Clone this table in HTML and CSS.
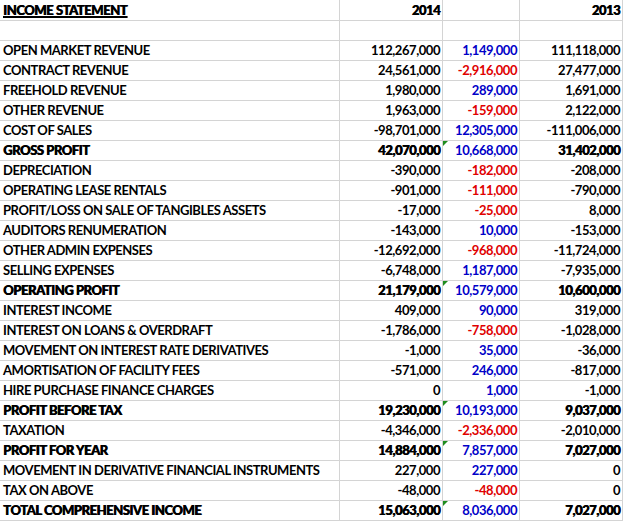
FILE: index.html
```html
<!DOCTYPE html>
<html>
<head>
<meta charset="utf-8">
<link rel="stylesheet" href="styles.css">
</head>
<body>
<div class="sheet">
  <div class="c lab title"><span class="u">INCOME STATEMENT</span></div><div class="c num b">2014</div><div class="c num"></div><div class="c num b">2013</div>
  <div class="c lab"></div><div class="c num"></div><div class="c num"></div><div class="c num"></div>
  <div class="c lab">OPEN MARKET REVENUE</div><div class="c num">112,267,000</div><div class="c num pos">1,149,000</div><div class="c num">111,118,000</div>
  <div class="c lab">CONTRACT REVENUE</div><div class="c num">24,561,000</div><div class="c num neg">-2,916,000</div><div class="c num">27,477,000</div>
  <div class="c lab">FREEHOLD REVENUE</div><div class="c num">1,980,000</div><div class="c num pos">289,000</div><div class="c num">1,691,000</div>
  <div class="c lab">OTHER REVENUE</div><div class="c num">1,963,000</div><div class="c num neg">-159,000</div><div class="c num">2,122,000</div>
  <div class="c lab">COST OF SALES</div><div class="c num">-98,701,000</div><div class="c num pos">12,305,000</div><div class="c num">-111,006,000</div>
  <div class="c lab b">GROSS PROFIT</div><div class="c num b">42,070,000</div><div class="c num pos flag">10,668,000</div><div class="c num b">31,402,000</div>
  <div class="c lab">DEPRECIATION</div><div class="c num">-390,000</div><div class="c num neg">-182,000</div><div class="c num">-208,000</div>
  <div class="c lab">OPERATING LEASE RENTALS</div><div class="c num">-901,000</div><div class="c num neg">-111,000</div><div class="c num">-790,000</div>
  <div class="c lab">PROFIT/LOSS ON SALE OF TANGIBLES ASSETS</div><div class="c num">-17,000</div><div class="c num neg">-25,000</div><div class="c num">8,000</div>
  <div class="c lab">AUDITORS RENUMERATION</div><div class="c num">-143,000</div><div class="c num pos">10,000</div><div class="c num">-153,000</div>
  <div class="c lab">OTHER ADMIN EXPENSES</div><div class="c num">-12,692,000</div><div class="c num neg">-968,000</div><div class="c num">-11,724,000</div>
  <div class="c lab">SELLING EXPENSES</div><div class="c num">-6,748,000</div><div class="c num pos">1,187,000</div><div class="c num">-7,935,000</div>
  <div class="c lab b">OPERATING PROFIT</div><div class="c num b">21,179,000</div><div class="c num pos flag">10,579,000</div><div class="c num b">10,600,000</div>
  <div class="c lab">INTEREST INCOME</div><div class="c num">409,000</div><div class="c num pos">90,000</div><div class="c num">319,000</div>
  <div class="c lab">INTEREST ON LOANS &amp; OVERDRAFT</div><div class="c num">-1,786,000</div><div class="c num neg">-758,000</div><div class="c num">-1,028,000</div>
  <div class="c lab">MOVEMENT ON INTEREST RATE DERIVATIVES</div><div class="c num">-1,000</div><div class="c num pos">35,000</div><div class="c num">-36,000</div>
  <div class="c lab">AMORTISATION OF FACILITY FEES</div><div class="c num">-571,000</div><div class="c num pos">246,000</div><div class="c num">-817,000</div>
  <div class="c lab">HIRE PURCHASE FINANCE CHARGES</div><div class="c num">0</div><div class="c num pos">1,000</div><div class="c num">-1,000</div>
  <div class="c lab b">PROFIT BEFORE TAX</div><div class="c num b">19,230,000</div><div class="c num pos flag">10,193,000</div><div class="c num b">9,037,000</div>
  <div class="c lab">TAXATION</div><div class="c num">-4,346,000</div><div class="c num neg">-2,336,000</div><div class="c num">-2,010,000</div>
  <div class="c lab b">PROFIT FOR YEAR</div><div class="c num b">14,884,000</div><div class="c num pos flag">7,857,000</div><div class="c num b">7,027,000</div>
  <div class="c lab">MOVEMENT IN DERIVATIVE FINANCIAL INSTRUMENTS</div><div class="c num">227,000</div><div class="c num pos">227,000</div><div class="c num">0</div>
  <div class="c lab">TAX ON ABOVE</div><div class="c num">-48,000</div><div class="c num neg">-48,000</div><div class="c num">0</div>
  <div class="c lab b">TOTAL COMPREHENSIVE INCOME</div><div class="c num b">15,063,000</div><div class="c num pos flag">8,036,000</div><div class="c num b">7,027,000</div>
</div>
</body>
</html>
```
FILE: styles.css
```css
html, body {
  margin: 0;
  padding: 0;
  background: #ffffff;
}
.sheet {
  display: grid;
  grid-template-columns: 340px 103px 77px 103px;
  grid-template-rows: 21px;
  grid-auto-rows: 20px;
  width: 623px;
  font-family: "Lato", "Open Sans", sans-serif;
  font-size: 13px;
  font-weight: 700;
  letter-spacing: -0.45px;
  color: #000;
}
.c {
  box-sizing: border-box;
  border-right: 1px solid #d4d4d4;
  border-bottom: 1px solid #d4d4d4;
  display: flex;
  align-items: flex-end;
  padding: 0 2px 2px 3px;
  white-space: nowrap;
  overflow: hidden;
  line-height: 16px;
  position: relative;
}
.num {
  justify-content: flex-end;
}
.b {
  font-weight: 900;
  text-shadow: 0.6px 0 0 currentColor;
}
.title {
  font-weight: 900;
  text-shadow: 0.6px 0 0 currentColor;
}
.u {
  text-decoration: underline;
  text-decoration-thickness: 1.5px;
}
.pos {
  color: #0000c8;
}
.neg {
  color: #e00000;
}
.flag::before {
  content: "";
  position: absolute;
  left: 0;
  top: 0;
  border-top: 5px solid #1e8c1e;
  border-right: 5px solid transparent;
}
```
